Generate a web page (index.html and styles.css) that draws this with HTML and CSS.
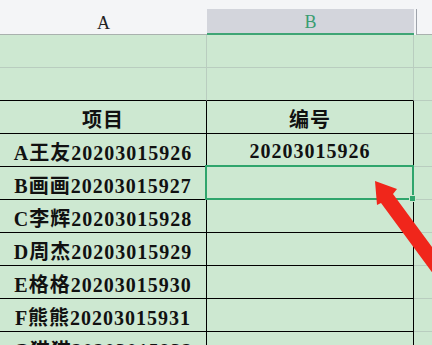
FILE: index.html
```html
<!DOCTYPE html>
<html lang="zh-CN">

<head>
    <meta charset="UTF-8">
    <title>工作表</title>
    <link rel="stylesheet" href="styles.css">
</head>

<body>
    <div class="sheet">
        <!-- column letters -->
        <div class="colhead">
            <div class="col">A</div>
            <div class="col active">B</div>
            <div class="col rest"></div>
        </div>

        <div class="grid">
            <div class="cell"></div>
            <div class="cell"></div>
            <div class="cell rest"></div>

            <div class="cell"></div>
            <div class="cell"></div>
            <div class="cell rest"></div>

            <div class="cell tbl">项目</div>
            <div class="cell tbl">编号</div>
            <div class="cell rest"></div>

            <div class="cell tbl">A王友20203015926</div>
            <div class="cell tbl">20203015926</div>
            <div class="cell rest"></div>

            <div class="cell tbl">B画画20203015927</div>
            <div class="cell tbl selected"><span class="handle"></span></div>
            <div class="cell rest"></div>

            <div class="cell tbl">C李辉20203015928</div>
            <div class="cell tbl"></div>
            <div class="cell rest"></div>

            <div class="cell tbl">D周杰20203015929</div>
            <div class="cell tbl"></div>
            <div class="cell rest"></div>

            <div class="cell tbl">E格格20203015930</div>
            <div class="cell tbl"></div>
            <div class="cell rest"></div>

            <div class="cell tbl">F熊熊20203015931</div>
            <div class="cell tbl"></div>
            <div class="cell rest"></div>

            <div class="cell tbl">G猫猫20203015932</div>
            <div class="cell tbl"></div>
            <div class="cell rest"></div>
        </div>

        <!-- red pointer drawn over the sheet -->
        <svg class="pointer" width="432" height="345" viewBox="0 0 432 345">
            <polygon fill="#f0261b"
                points="375,181 397,189 393,194 452,274 440,283 381,203 377,205" />
        </svg>
    </div>
</body>

</html>
```

FILE: styles.css
```css
body {
    margin: 0;
    background-color: #cde8d1;
}

.sheet {
    position: relative;
    width: 432px;
    height: 345px;
    overflow: hidden;
    background-color: #cde8d1;
}

.colhead {
    display: grid;
    grid-template-columns: 207px 207px 1fr;
    height: 35px;
    background-color: #f4f5f7;
}

.col {
    display: flex;
    align-items: center;
    justify-content: center;
    margin-top: 9px;
    padding-top: 3px;
    border-bottom: 1px solid #a9b1ae;
    border-right: 1px solid #c9ccd2;
    font-family: "Liberation Serif", serif;
    font-size: 18px;
    color: #222;
}

.col:first-child {
    border-right: none;
}

.col.active {
    background-color: #d3d5dc;
    border-bottom: 2px solid #3fa575;
    border-right: none;
    color: #3a9d72;
}

.col.rest {
    margin-left: 2px;
    border-left: 1px solid #9ea3ab;
    border-right: none;
}

.grid {
    display: grid;
    grid-template-columns: 207px 207px 1fr;
    grid-auto-rows: 33px;
}

.cell {
    display: flex;
    align-items: center;
    justify-content: center;
    padding-top: 3px;
    box-sizing: border-box;
    border-right: 1px solid #b9cdbf;
    border-bottom: 1px solid #b9cdbf;
    font-family: "Liberation Serif", "Noto Sans CJK SC", serif;
    font-weight: bold;
    font-size: 20px;
    letter-spacing: 1px;
    color: #111;
}

.cell.rest {
    border-right: none;
}

/* the bordered table */
.cell.tbl {
    border-right-color: #000;
    border-bottom-color: #000;
}

.grid .cell:nth-child(4),
.grid .cell:nth-child(5) {
    border-bottom-color: #000;
}

.cell.selected {
    position: relative;
}

.cell.selected::after {
    content: "";
    position: absolute;
    left: -2px;
    top: -2px;
    right: -1px;
    bottom: -1px;
    border: 2px solid #2fa56c;
}

.handle {
    position: absolute;
    right: -3px;
    bottom: -3px;
    width: 5px;
    height: 5px;
    background-color: #2fa56c;
    border: 1px solid #cde8d1;
    z-index: 1;
}

.pointer {
    position: absolute;
    left: 0;
    top: 0;
}
```
